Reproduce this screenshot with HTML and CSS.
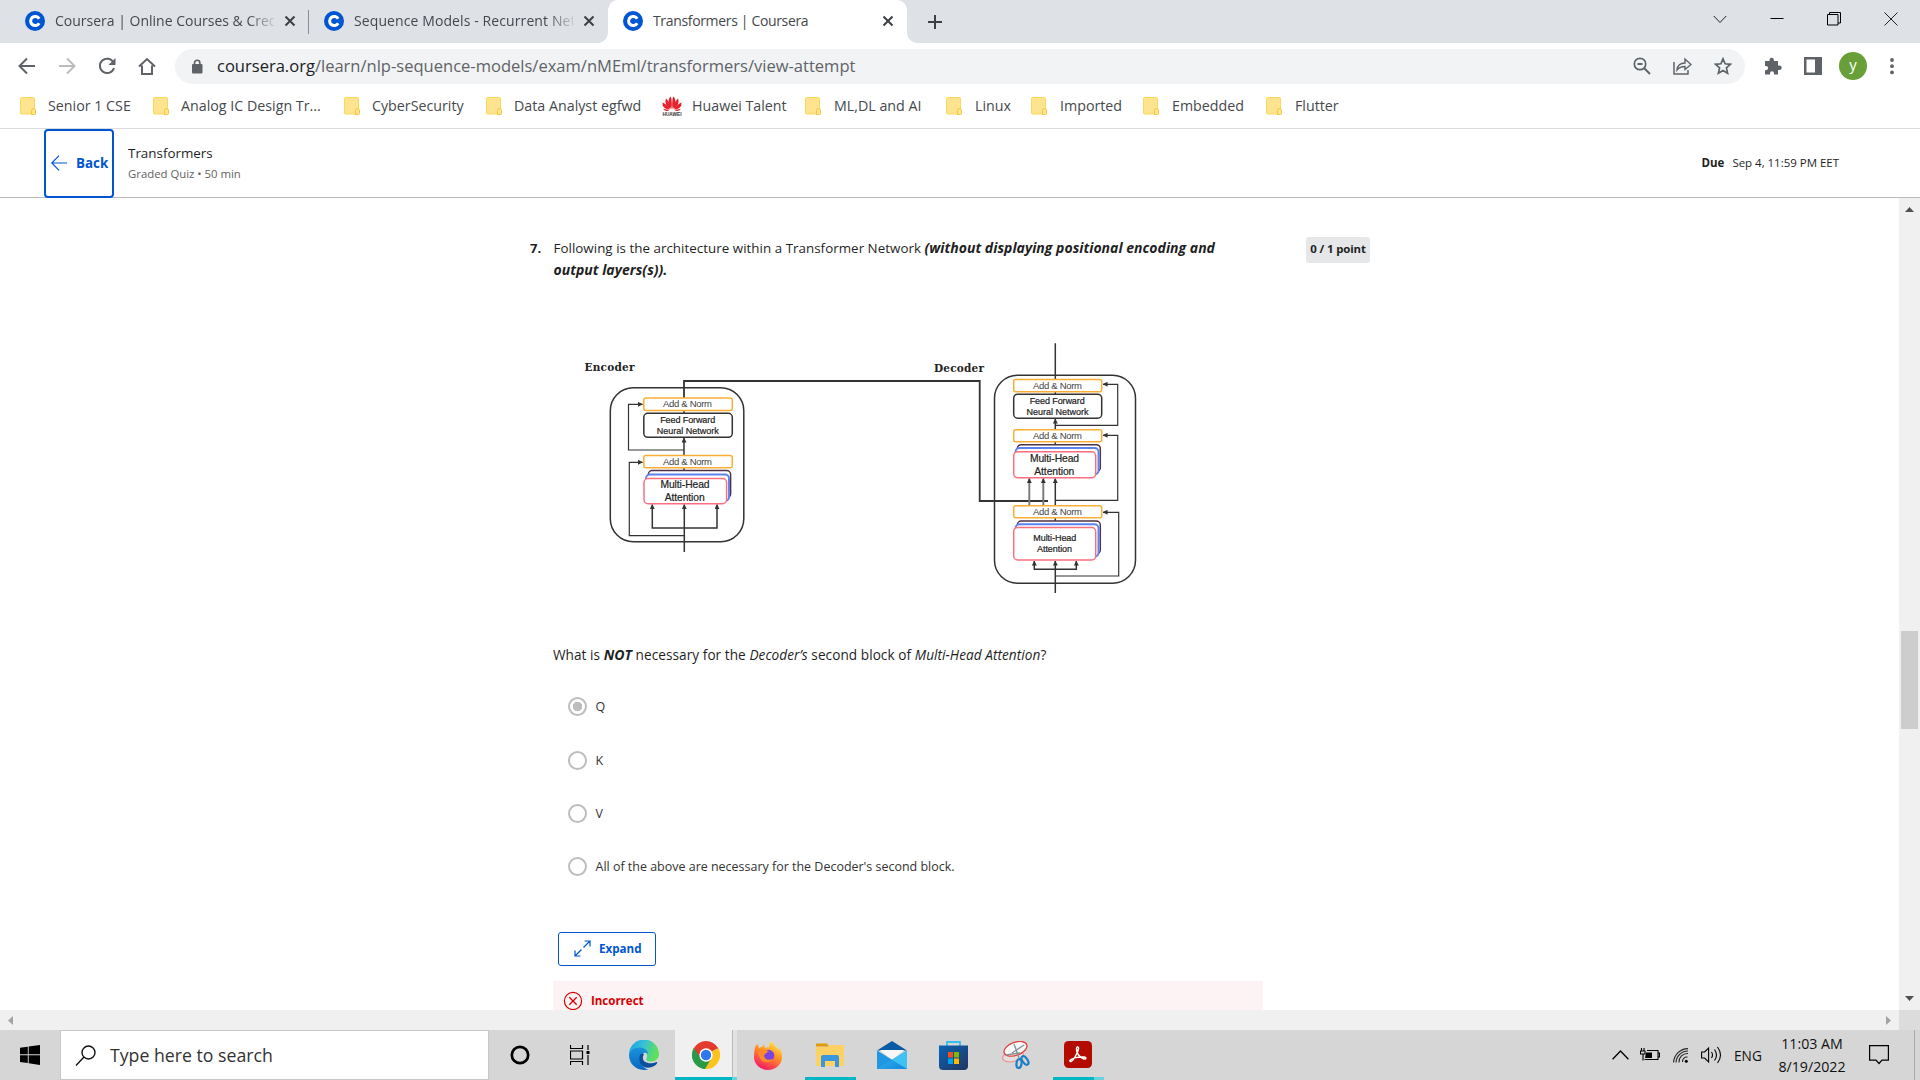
FILE: index.html
```html
<!DOCTYPE html>
<html lang="en">
<head>
<meta charset="utf-8">
<title>Transformers | Coursera</title>
<link rel="stylesheet" href="styles.css">
</head>
<body>
<svg class="defs" width="0" height="0">
  <defs>
    <symbol id="cour" viewBox="0 0 20 20"><circle cx="10" cy="10" r="10" fill="#0056d2"/><path d="M14.2 12.3A4.6 4.6 0 1 1 14.2 7.7" fill="none" stroke="#fff" stroke-width="3"/></symbol>
    <symbol id="x" viewBox="0 0 12 12"><path d="M1.5 1.5l9 9M10.500 1.500l-9 9" stroke="#3c4043" stroke-width="2"/></symbol>
    <symbol id="folder" viewBox="0 0 16 18"><path d="M1.500.5h12q1 0 1 1v15.500h-13q-1 0-1-1V1.500q0-1 1-1z" fill="#ffe48f" stroke="#fbd75b"/><path d="M11.500 17.500v-4l1-1.800h2l1 1.300v3.500q0 1-1 1z" fill="#ffe48f" stroke="#f3c63d"/></symbol>
    <marker id="arr" viewBox="0 0 6 6" refX="5.500" refY="3" markerWidth="5" markerHeight="5" markerUnits="userSpaceOnUse" orient="auto"><path d="M0 0L6 3L0 6z" fill="#333"/></marker>
    <linearGradient id="edgeA" x1="0" y1="0" x2="1" y2=".3"><stop offset="0" stop-color="#1b9de2"/><stop offset=".5" stop-color="#35c1d8"/><stop offset="1" stop-color="#5fe05a"/></linearGradient>
    <linearGradient id="edgeB" x1="0" y1="0" x2="0" y2="1"><stop offset="0" stop-color="#1a93dc"/><stop offset="1" stop-color="#0967c0"/></linearGradient>
    <linearGradient id="fox" x1=".8" y1="0" x2=".3" y2="1"><stop offset="0" stop-color="#fff14a"/><stop offset=".45" stop-color="#ff9022"/><stop offset="1" stop-color="#f5156c"/></linearGradient>
    <linearGradient id="mailg" x1="0" y1="0" x2="1" y2="1"><stop offset="0" stop-color="#35c0f2"/><stop offset="1" stop-color="#1583dc"/></linearGradient>
    <linearGradient id="storeg" x1="0" y1="0" x2="1" y2="1"><stop offset="0" stop-color="#0a63b5"/><stop offset="1" stop-color="#22355f"/></linearGradient>
  </defs>
</svg>

<div class="screen">
  <div class="tabs">
    <div class="tab first"><svg class="fav"><use href="#cour"/></svg><span class="tt fade snug">Coursera | Online Courses &amp; Cred</span><svg class="tx"><use href="#x"/></svg></div>
    <div class="tab"><svg class="fav"><use href="#cour"/></svg><span class="tt fade">Sequence Models - Recurrent Net</span><svg class="tx"><use href="#x"/></svg></div>
    <div class="tab active"><svg class="fav"><use href="#cour"/></svg><span class="tt tight">Transformers | Coursera</span><svg class="tx"><use href="#x"/></svg></div>
    <svg class="plus" viewBox="0 0 16 16"><path d="M8 1v14M1 8h14" stroke="#3c4043" stroke-width="2"/></svg>
    <div class="win">
      <svg viewBox="0 0 14 14"><path d="M.8 4l6.200 6.500L13.200 4" fill="none" stroke="#222"/></svg>
      <svg viewBox="0 0 14 14"><path d="M.5 6.500h13" stroke="#000"/></svg>
      <svg viewBox="0 0 14 14"><path d="M.5 2.500h10.500v10.500H.5zM2.500 2.500V.5h11v10.500H11" fill="none" stroke="#000"/></svg>
      <svg viewBox="0 0 14 14"><path d="M.5.5l13 13M13.500.5l-13 13" stroke="#222"/></svg>
    </div>
  </div>

  <div class="toolbar">
    <div class="nav">
      <svg viewBox="0 0 18 18"><path d="M17 9H2M9 1.500L1.500 9 9 16.500" fill="none" stroke="#5f6368" stroke-width="2"/></svg>
      <svg viewBox="0 0 18 18"><path d="M1 9h15M9 1.500L16.500 9 9 16.500" fill="none" stroke="#babcbe" stroke-width="2"/></svg>
      <svg viewBox="0 0 18 18"><path d="M15.500 5.500A7.200 7.200 0 1 0 16 11" fill="none" stroke="#5f6368" stroke-width="2"/><path d="M17.500 1v7h-7z" fill="#5f6368"/></svg>
      <svg viewBox="0 0 18 18"><path d="M1 9.500L9 2l8 7.500M4 8.500V17h10V8.500" fill="none" stroke="#5f6368" stroke-width="2"/></svg>
    </div>
    <div class="omni">
      <svg class="lock" viewBox="0 0 12 15"><rect x="1" y="5" width="10.500" height="9.500" rx="1" fill="#5f6368"/><path d="M3.500 6V4a2.700 2.700 0 0 1 5.400 0v2" fill="none" stroke="#5f6368" stroke-width="1.600"/></svg>
      <span class="url"><b>coursera.org</b>/learn/nlp-sequence-models/exam/nMEml/transformers/view-attempt</span>
      <svg class="oi" viewBox="0 0 18 18"><circle cx="7" cy="7" r="5.700" fill="none" stroke="#5f6368" stroke-width="1.700"/><path d="M4.500 7h5M11 11l6 6" stroke="#5f6368" stroke-width="1.900"/></svg>
      <svg class="oi share" viewBox="0 0 19 18"><path d="M1 5v12h14v-4" fill="none" stroke="#5f6368" stroke-width="1.500"/><path d="M4 13c.5-5 3-7 8-7V2l6 5.500-6 5V9.500c-4 0-6 1-8 3.500z" fill="none" stroke="#5f6368" stroke-width="1.400"/></svg>
      <svg class="oi" viewBox="0 0 18 18"><path d="M9 1.800l2.100 5 5.400.5-4.100 3.600 1.200 5.300L9 13.400l-4.600 2.800 1.200-5.300L1.500 7.300l5.400-.5z" fill="none" stroke="#5f6368" stroke-width="1.700"/></svg>
    </div>
    <div class="ext">
      <svg viewBox="0 0 18 18"><path d="M1 4h4.500V3a2.200 2.200 0 0 1 4.400 0v1H14v4.500h1.500a2.200 2.200 0 0 1 0 4.400H14V17.500h-4v-1.300a2 2 0 0 0-4 0v1.300H1v-4.300h1a2 2 0 0 0 0-4.200H1z" fill="#5f6368"/></svg>
      <svg viewBox="0 0 18 18"><path d="M0 0h18v18H0zM2.500 2.500v13h8.500v-13z" fill="#5f6368" fill-rule="evenodd"/></svg>
      <span class="avatar">y</span>
      <svg viewBox="0 0 18 18"><circle cx="9" cy="3" r="1.900" fill="#5f6368"/><circle cx="9" cy="9.200" r="1.900" fill="#5f6368"/><circle cx="9" cy="15.400" r="1.900" fill="#5f6368"/></svg>
    </div>
  </div>

  <div class="marks">
    <span class="mk"><svg><use href="#folder"/></svg>Senior 1 CSE</span>
    <span class="mk"><svg><use href="#folder"/></svg>Analog IC Design Tr...</span>
    <span class="mk"><svg><use href="#folder"/></svg>CyberSecurity</span>
    <span class="mk"><svg><use href="#folder"/></svg>Data Analyst egfwd</span>
    <span class="mk"><svg class="hw" viewBox="0 0 20 20"><g fill="#e5222b"><path d="M9.500 13C5.500 8 6 2 8.800 0.500 10 4 10 9 9.500 13zM10.500 13C14.500 8 14 2 11.200 0.500 10 4 10 9 10.500 13z"/><path d="M8.500 13.300C4 10.500 2.500 6 4 2.500 7 5 8.500 9 8.500 13.300zM11.500 13.300C16 10.500 17.500 6 16 2.500 13 5 11.500 9 11.500 13.300z"/><path d="M7.500 13.600C3 13.400 0 10.500.5 6.500 4 8 6.500 10.500 7.500 13.600zM12.500 13.600C17 13.400 20 10.500 19.500 6.500 16 8 13.500 10.500 12.500 13.600z"/><path d="M7.500 14.300C5 15.700 2.500 15 1.200 12.800zM12.500 14.300c2.500 1.400 5 .7 6.300-1.500z"/></g><text x="0.500" y="19.600" font-size="4.800" font-weight="700" textLength="19" lengthAdjust="spacingAndGlyphs" fill="#333">HUAWEI</text></svg>Huawei Talent</span>
    <span class="mk"><svg><use href="#folder"/></svg>ML,DL and AI</span>
    <span class="mk"><svg><use href="#folder"/></svg>Linux</span>
    <span class="mk"><svg><use href="#folder"/></svg>Imported</span>
    <span class="mk"><svg><use href="#folder"/></svg>Embedded</span>
    <span class="mk"><svg><use href="#folder"/></svg>Flutter</span>
  </div>

  <header class="head">
    <div class="back"><svg viewBox="0 0 16 16"><path d="M16 8H1M8 .7L.8 8 8 15.300" fill="none" stroke="#0056d2" stroke-width="1.200"/></svg>Back</div>
    <div class="ttl"><div class="t1">Transformers</div><div class="t2">Graded Quiz • 50 min</div></div>
    <div class="due"><b>Due</b><span>Sep 4, 11:59 PM EET</span></div>
  </header>

  <div class="view">
    <main class="content">
      <div class="qrow">
        <div class="num">7.</div>
        <div class="qt">Following is the architecture within a Transformer Network <b class="bi">(without displaying positional encoding and output layers(s)).</b></div>
        <div class="pts">0 / 1 point</div>
      </div>

      <svg class="dia" viewBox="553 330 597 280" width="597" height="280">
        <g fill="none" stroke="#333" stroke-width="1.500">
          <rect x="610.300" y="387.700" width="133.500" height="154" rx="23"/>
          <rect x="994.500" y="375.300" width="141" height="208" rx="23"/>
          <path d="M684 398V381H979.700V501H1048" stroke-width="1.800"/>
          <path d="M684 455.300V438" marker-end="url(#arr)"/>
          <path d="M684 450H628.500V404.300H642.500" stroke-width="1.200" marker-end="url(#arr)"/>
          <path d="M684 414v-4M684 471v-4"/>
          <path d="M684.300 552V504.500" marker-end="url(#arr)"/>
          <path d="M684 528H652.300V504.500" marker-end="url(#arr)"/>
          <path d="M684 528H717V504.500" marker-end="url(#arr)"/>
          <path d="M684 535.700H629.300V462.300H642.500" stroke-width="1.200" marker-end="url(#arr)"/>
          <path d="M1055.300 343.300V379M1055.300 391v4M1055.300 441v4M1055.300 517v4"/>
          <path d="M1055.300 430V419" marker-end="url(#arr)"/>
          <path d="M1055.300 425.400H1117.700V384.300H1103" stroke-width="1.200" marker-end="url(#arr)"/>
          <path d="M1055.300 506V478.500" marker-end="url(#arr)"/>
          <path d="M1055.300 500.300H1117.700V435.300H1103" stroke-width="1.200" marker-end="url(#arr)"/>
          <path d="M1029.300 505V478.500" stroke-width="1.900" stroke="#777" marker-end="url(#arr)"/>
          <path d="M1043.300 505V478.500" stroke-width="1.900" stroke="#777" marker-end="url(#arr)"/>
          <path d="M1055.300 593V561" marker-end="url(#arr)"/>
          <path d="M1055.300 569.300H1034.300V561" marker-end="url(#arr)"/>
          <path d="M1055.300 569.300H1076.300V561" marker-end="url(#arr)"/>
          <path d="M1055.300 576H1118.700V512.300H1103" stroke-width="1.200" marker-end="url(#arr)"/>
        </g>
        <g fill="#fff" stroke-width="1.500">
          <g stroke="#fbae35"><rect x="643.800" y="398" width="88.500" height="12.500" rx="2"/><rect x="643.800" y="455.500" width="88.500" height="12.300" rx="2"/><rect x="1013.700" y="379.500" width="88" height="12.200" rx="2"/><rect x="1013.700" y="429.700" width="88" height="12" rx="2"/><rect x="1013.700" y="505.800" width="88" height="12" rx="2"/></g>
          <g stroke="#333"><rect x="643.800" y="413.300" width="88.500" height="24" rx="4"/><rect x="1013.700" y="394.200" width="88" height="24" rx="4"/></g>
          <g stroke="#4f3145"><rect x="648.300" y="470.500" width="82.300" height="27.500" rx="4"/><rect x="1017.300" y="444.700" width="83" height="27" rx="4"/><rect x="1017.300" y="521" width="83" height="33" rx="4"/></g>
          <g stroke="#5b82ee" stroke-width="1.900"><rect x="646" y="474.500" width="83" height="26.500" rx="4"/><rect x="1015.500" y="448" width="83" height="26.500" rx="4"/><rect x="1015.500" y="524.200" width="83" height="32.500" rx="4"/></g>
          <g stroke="#fb6f80"><rect x="644" y="478.500" width="82.600" height="25.200" rx="4"/><rect x="1013.700" y="451.800" width="82" height="26" rx="4"/><rect x="1013.700" y="527.500" width="82" height="32.500" rx="4"/></g>
        </g>
        <g class="an"><text x="663" y="407.200" textLength="49">Add &amp; Norm</text><text x="663" y="465" textLength="49">Add &amp; Norm</text><text x="1033" y="389" textLength="49">Add &amp; Norm</text><text x="1033" y="439.300" textLength="49">Add &amp; Norm</text><text x="1033" y="515.300" textLength="49">Add &amp; Norm</text></g>
        <g class="bl"><text x="660.200" y="423.200" textLength="55">Feed Forward</text><text x="656.700" y="433.800" textLength="62">Neural Network</text><text x="1029.700" y="404.200" textLength="55">Feed Forward</text><text x="1026.500" y="414.800" textLength="62">Neural Network</text><text x="1033.300" y="541.300" textLength="43">Multi-Head</text><text x="1037" y="552.300" textLength="35">Attention</text></g>
        <g class="bl big"><text x="660.500" y="488.300" textLength="49">Multi-Head</text><text x="664.700" y="500.500" textLength="40">Attention</text><text x="1030" y="462.300" textLength="49">Multi-Head</text><text x="1034.300" y="474.500" textLength="40">Attention</text></g>
        <g class="cap"><text x="584.500" y="371" textLength="50">Encoder</text><text x="934" y="372.300" textLength="50">Decoder</text></g>
      </svg>

      <div class="ask">What is <b class="bi">NOT</b> necessary for the <i>Decoder’s</i> second block of <i>Multi-Head Attention</i>?</div>

      <div class="opts">
        <div class="opt"><span class="rad on"></span>Q</div>
        <div class="opt"><span class="rad"></span>K</div>
        <div class="opt"><span class="rad"></span>V</div>
        <div class="opt"><span class="rad"></span>All of the above are necessary for the Decoder's second block.</div>
      </div>

      <div class="expand"><svg viewBox="0 0 17 17"><path d="M10.500 1H16v5.500M16 1L9.500 7.500M1 10.500V16h5.500M1 16l6.500-6.500" fill="none" stroke="#0056d2" stroke-width="1.200"/></svg>Expand</div>
      <div class="wrong"><svg viewBox="0 0 20 20"><circle cx="10" cy="10" r="8.600" fill="none" stroke="#d30001" stroke-width="1.200"/><path d="M6.300 6.300l7.400 7.400M13.700 6.300l-7.400 7.400" stroke="#d30001" stroke-width="1.300"/></svg>Incorrect</div>
    </main>
    <div class="vbar">
      <svg viewBox="0 0 9 5"><path d="M0 5L4.500 0 9 5z" fill="#505050"/></svg>
      <div class="thumb"></div>
      <svg viewBox="0 0 9 5"><path d="M0 0L4.500 5 9 0z" fill="#505050"/></svg>
    </div>
  </div>
  <div class="hbar">
    <svg viewBox="0 0 5 9"><path d="M5 0L0 4.500 5 9z" fill="#a3a3a3"/></svg>
    <svg viewBox="0 0 5 9"><path d="M0 0L5 4.500 0 9z" fill="#a3a3a3"/></svg>
    <div class="corner"></div>
  </div>

  <div class="task">
    <div class="start"><svg width="20" height="20" viewBox="0 0 20 20"><path d="M0 2.800L7.800 1.700V9.300H0zM8.700 1.500L20 0v9.300H8.700zM0 10.300h7.800v7.800L0 17zM8.700 10.300H20V20L8.700 18.300z"/></svg></div>
    <div class="search"><svg width="21" height="21" viewBox="0 0 21 21"><circle cx="13.500" cy="7.500" r="6.500" fill="none" stroke="#111" stroke-width="1.400"/><path d="M9 12L1 20.500" stroke="#111" stroke-width="1.400"/></svg>Type here to search</div>
    <div class="cell"><svg width="20" height="20" viewBox="0 0 20 20"><circle cx="10" cy="10" r="8.200" fill="none" stroke="#000" stroke-width="2.700"/></svg></div>
    <div class="cell tv"><svg width="20" height="20" viewBox="0 0 20 20"><path d="M.5 0v3.500h12V0M.5 20v-3.500h12V20M.5 6h12v8H.5zM18 0v5M18 10v10" fill="none" stroke="#000" stroke-width="1.200"/><path d="M16.500 6h3v3h-3z"/></svg></div>
    <div class="cell"><svg width="30" height="30" viewBox="0 0 30 30"><path d="M0 15A15 15 0 0 1 30 14c0 5-4 7.500-8 7.500-4 0-5.500-1.500-4.500-3 2-4-1-8-6-8.500C6 9.500 1 12 0 15z" fill="url(#edgeA)"/><path d="M0 15c1-5 6-8 11-7.500 5 .5 8 3.500 8 6.500-3-3-8 0-7.500 6 .4 4 3 8.500 8 9.500C9 32 0 25 0 15z" fill="url(#edgeB)"/><path d="M11 15c-3 8 4 17 15 10.500 1.500-1 2.800-3 2-3.500-.8-.4-2 1-5.500 1.200C15 23.500 12 19 15 14c-2-.5-3.500 0-4 1z" fill="#0c4f9c"/></svg></div>
    <div class="cell cur"><svg width="28" height="28" viewBox="0 0 28 28"><path d="M14 14L1.900 7A14 14 0 0 1 26.100 7z" fill="#e33b2e"/><path d="M14 14V28A14 14 0 0 1 1.900 7z" fill="#2a9a48"/><path d="M14 14l12.100-7A14 14 0 0 1 13 28z" fill="#fcc31e"/><path d="M14 7.500h12.400A14 14 0 0 0 26.100 7L1.900 7l6.500 10.200z" fill="#e33b2e"/><path d="M8.400 17.200L1.900 7A14 14 0 0 0 13 28l6.500-11z" fill="#2a9a48"/><circle cx="14" cy="14" r="6.700" fill="#fff"/><circle cx="14" cy="14" r="5.200" fill="#3079ea"/></svg></div>
    <div class="cell"><svg width="28" height="29" viewBox="0 0 28 29"><path d="M1.500 5l2-2 1.500 4c1-.6 2-1 3-1l2-3 1 4c2-1 3-1 4-.5C14.500 4 16 1.500 18 0c1 4 5 5.500 6.500 9 1-.5 0-3 0-3 3 3 3.500 7 3.500 10a14 13 0 0 1-28 0C0 12 .5 8 1.500 5z" fill="url(#fox)"/><circle cx="14.500" cy="14.500" r="5.800" fill="#7b45dd"/><path d="M4 12c4-3 9-4 11-1-3 0-3 2-5 3 0 4 4 6 9 4-3 5-12 4-13-1z" fill="#ff8b2b"/></svg></div>
    <div class="cell run"><svg width="28" height="26" viewBox="0 0 28 26"><path d="M0 1.500h11l2 3H0z" fill="#df9a05"/><path d="M0 5h12l2-2h14v21H0z" fill="#fed164"/><path d="M5 25V15q0-2 2-2h14q2 0 2 2v10h-4v-6H9v6z" fill="#3a97dd"/></svg></div>
    <div class="cell"><svg width="30" height="28" viewBox="0 0 30 28"><path d="M0 9.500L15 0l15 9.500z" fill="#0a5aa5"/><path d="M3 9h24l-12 10z" fill="#f7f7f7"/><path d="M0 9.500L30 28H0z" fill="#2197e4"/><path d="M30 9.500V28L0 28z" fill="url(#mailg)"/><path d="M15 18.700L30 28V9.500z" fill="#3cc3f3"/></svg></div>
    <div class="cell store"><svg width="29" height="29" viewBox="0 0 29 29"><path d="M8 5V1h13v4" fill="none" stroke="#35bdf0" stroke-width="1.800"/><path d="M0 4.500h29V25q0 4-4 4H4q-4 0-4-4z" fill="url(#storeg)"/><path d="M9 11h5v5.500H9z" fill="#f25022"/><path d="M15 11h5v5.500h-5z" fill="#7fba00"/><path d="M9 17.500h5V23H9z" fill="#00a4ef"/><path d="M15 17.500h5V23h-5z" fill="#ffb900"/></svg></div>
    <div class="cell"><svg width="28" height="28" viewBox="0 0 28 28"><ellipse cx="11" cy="15" rx="10.500" ry="5.500" fill="#e6dede" stroke="#e88" transform="rotate(-14 11 15)"/><ellipse cx="13.500" cy="7.800" rx="12" ry="6.500" fill="#fafafa" stroke="#e34040" stroke-width="1.300" transform="rotate(-20 13.500 7.800)"/><path d="M12 3l5 14M4 14l14-2M22 4L10 12" stroke="#8a9299" stroke-width="1.400"/><g fill="none" stroke="#1d7fc4" stroke-width="2.200"><ellipse cx="17" cy="22.500" rx="2.500" ry="4.500" transform="rotate(8 17 22.500)"/><ellipse cx="23" cy="19.500" rx="2.500" ry="4.800" transform="rotate(-35 23 19.500)"/></g></svg></div>
    <div class="cell acr"><svg width="28" height="27" viewBox="0 0 28 27"><rect width="28" height="27" rx="4.500" fill="#b30b00"/><path d="M6 19.500c1.500-2.500 9-4 14-3.500 3 .5 2 2.500 0 2-4-1-8-6-7.500-10.500.4-2.500 2.500-2 2 .5C13.500 12 9 20.500 7 20.500c-1 0-1.300-.5-1-1z" fill="none" stroke="#fff" stroke-width="1.500"/></svg></div>
    <div class="tray">
      <svg width="17" height="10" viewBox="0 0 17 10"><path d="M.6 9.200L8.500 1l7.900 8.200" fill="none" stroke="#000" stroke-width="1.300"/></svg>
      <svg class="bat" width="20" height="14" viewBox="0 0 20 14"><path d="M7 2.500h11v9H4.500M18.500 5h1v4h-1M1.500 0v3M4 0v3M.5 3h4.500v3H.5zM3 6v6.500" fill="none" stroke="#000" stroke-width="1.100"/><path d="M6 4.500h6v5.500H5z"/></svg>
      <svg class="wifi" width="16" height="15" viewBox="0 0 16 15"><circle cx="13.300" cy="13.300" r="1.500"/><path d="M9.500 14a4.500 4.500 0 0 1 5-5M6 14.500A8.500 8.500 0 0 1 15 5.500M3 14.500A12 12 0 0 1 15 3M.6 14.500A14.500 14.500 0 0 1 15 .6" fill="none" stroke="#222" stroke-width="1.100"/></svg>
      <svg class="vol" width="21" height="18" viewBox="0 0 21 18"><path d="M.6 6h3l4-4v14l-4-4h-3zM10.500 6q2 3 0 6M13.500 3.500q4 5.500 0 11M16.500 1q6 8 0 16" fill="none" stroke="#000" stroke-width="1.100"/></svg>
      <span class="eng">ENG</span>
      <div class="clock"><div>11:03 AM</div><div>8/19/2022</div></div>
      <svg class="note" width="20" height="20" viewBox="0 0 20 20"><path d="M.6.600h18.800v14.500H13L10 18.500 7 15.100H.6z" fill="none" stroke="#000" stroke-width="1.200"/></svg>
      <i class="peek"></i>
    </div>
  </div>
</div>
</body>
</html>
```
FILE: styles.css
```css
*{box-sizing:border-box}
body{margin:0;font-family:"Open Sans","Noto Sans",sans-serif;background:#fff;color:#1f1f1f}
svg{display:block;flex:none}
.defs{position:absolute}
.screen{width:1920px;height:1080px;display:flex;flex-direction:column;overflow:hidden}

.tabs{height:43px;background:#dee1e6;display:flex;align-items:center;padding-left:10px;flex:none}
.tab{width:299px;height:43px;display:flex;align-items:center;padding:0 13px 2px 15px}
.tab.first{background:linear-gradient(#8a8d91,#8a8d91) right 0 top 10px/1px 24px no-repeat}
.tab.active{background:#fff;border-radius:10px 10px 0 0;position:relative}
.tab.active:before,.tab.active:after{content:"";position:absolute;bottom:0;width:10px;height:10px}
.tab.active:before{left:-10px;background:radial-gradient(circle at 0 0,transparent 9.5px,#fff 10px)}
.tab.active:after{right:-10px;background:radial-gradient(circle at 100% 0,transparent 9.5px,#fff 10px)}
.fav{width:20px;height:20px}
.tt{margin-left:10px;width:219px;font-size:14px;letter-spacing:.1px;color:#45494d;white-space:nowrap;overflow:hidden;flex:none}
.fade{-webkit-mask-image:linear-gradient(90deg,#000 88%,transparent 102%);mask-image:linear-gradient(90deg,#000 88%,transparent 102%)}
.snug{letter-spacing:0}
.tight{letter-spacing:-.34px}
.tx{width:12px;height:12px;margin-left:10px}
.plus{width:16px;height:16px;margin-left:20px}
.win{margin-left:auto;display:flex;gap:43px;padding:0 22px 6px 0}
.win svg{width:14px;height:14px}

.toolbar{height:47px;display:flex;align-items:center;flex:none;padding-bottom:1px}
.nav{width:175px;display:flex;gap:22px;padding:0 0 0 18px}
.nav svg{width:18px;height:18px}
.omni{width:1570px;height:35px;border-radius:18px;background:#f1f3f4;display:flex;align-items:center;padding:0 13px 0 16px}
.lock{width:12px;height:15px}
.url{flex:1;margin-left:14px;font-size:16.55px;line-height:24px;padding-bottom:1px;color:#5f6368;white-space:nowrap}
.url b{font-weight:400;color:#202124}
.oi{width:18px;height:18px;margin-left:22px}
.share{width:19px}
.ext{display:flex;align-items:center;gap:22px;padding:0 0 1px 19px}
.ext svg{width:18px;height:18px}
.ext svg:last-child{margin-left:-6px}
.avatar{width:28px;height:28px;border-radius:50%;background:#689f38;color:#fff;font-size:15px;line-height:25px;text-align:center;margin-left:-5px}

.marks{height:39px;flex:none;border-bottom:1px solid #dadce0;display:grid;grid-template-columns:133px 191px 142px 176px 143px 141px 85px 112px 123px 90px;padding:0 0 7px 20px;align-items:center;font-size:14.250px;color:#45494d}
.mk{display:flex;align-items:center;white-space:nowrap}
.mk svg{width:16px;height:18px;margin-right:12px}
.mk:nth-child(n+6) svg{margin-right:13px}
.mk .hw{width:20px;height:20px;margin:0 10px 0 0;font-family:"Liberation Sans",sans-serif}

.head{height:69px;flex:none;border-bottom:1px solid #bbb;display:flex;align-items:center;padding:0 81px 0 44px}
.back{width:70px;height:69px;border:2px solid #0056d2;border-radius:4px;color:#0056d2;font-weight:700;font-size:13.400px;display:flex;align-items:center;gap:9px;padding-left:5px}
.back svg{width:16px;height:16px}
.ttl{margin-left:14px;white-space:nowrap}
.t1{font-size:13.400px;line-height:21px}
.t2{font-size:11.350px;line-height:20px;color:#636363}
.due{margin-left:auto;display:flex;gap:8px;font-size:11.500px;letter-spacing:-.02px;padding-bottom:2px}
.due b{font-size:11.500px}

.view{height:812px;flex:none;display:flex;overflow:hidden}
.content{flex:1;padding:39px 0 0 529px;height:812px;overflow:hidden}
.qrow{display:flex;align-items:flex-start;height:93px;font-size:13.370px;line-height:22px}
.num{width:24.500px;padding-left:1px;font-weight:700;font-size:13px}
.qt{width:690px;white-space:normal;padding-right:10px;letter-spacing:.03px}
.bi{font-style:italic;font-weight:700;font-size:14px;letter-spacing:.02px}
.pts{margin-left:62.500px;width:64px;height:26px;background:#e5e7e8;border-radius:3px;font-size:11.400px;font-weight:700;text-align:center;line-height:24px;letter-spacing:-.1px}
.dia{margin-left:24px}
.an,.bl{font-family:"Liberation Sans",sans-serif;font-size:9.500px;fill:#444}
.bl{font-size:9px;fill:#222;stroke:#222;stroke-width:.2px}
.big{font-size:10.300px}
.cap{font-family:"DejaVu Serif","Liberation Serif",serif;font-weight:700;font-size:10.500px;fill:#222}
.ask{margin:34px 0 0 24px;font-size:13.600px;line-height:22px;letter-spacing:.060px;white-space:nowrap}
.opts{margin:14px 0 0 38.500px}
.opt{height:53.400px;display:flex;align-items:center;font-size:12.470px;color:#333}
.rad{width:19px;height:19px;border:2px solid #bdbdbd;border-radius:50%;margin-right:9px;flex:none}
.rad.on{background:radial-gradient(circle,#bdbdbd 4.500px,transparent 5px)}
.expand{margin:38px 0 0 29px;width:98px;height:34px;border:1px solid #0056d2;border-radius:3px;display:flex;align-items:center;gap:8px;padding:0 0 1px 15px;color:#0056d2;font-size:11.600px;font-weight:700}
.expand svg{width:17px;height:17px}
.wrong{margin:15px 0 0 24px;width:710px;height:40px;background:#fdf3f4;display:flex;align-items:center;gap:8px;padding:0 0 0 10px;color:#d30001;font-size:11.500px;font-weight:700}
.wrong svg{width:20px;height:20px}

.vbar{width:21px;background:#f0f0f0;display:flex;flex-direction:column;align-items:center;padding:9px 0}
.vbar svg{width:9px;height:5px}
.thumb{width:17px;height:98px;background:#cdcdcd;margin:419px 0 auto}
.hbar{height:20px;flex:none;background:#f0f0f0;display:flex;align-items:center;justify-content:space-between;padding-left:8px}
.hbar svg{width:5px;height:9px}
.hbar svg:nth-child(2){margin:0 8px 0 auto}
.corner{width:21px;height:20px;background:#dcdcdc}

.task{height:50px;background:#d6d6d6;display:flex;flex:none}
.start{width:60px;display:flex;align-items:center;justify-content:center}
.search{width:429px;background:#fff;border:1px solid #c8c8c8;display:flex;align-items:center;gap:14px;padding-left:14px;font-size:17.700px;color:#333}
.cell{width:62px;height:50px;display:flex;align-items:center;justify-content:center}
.tv{padding-right:4px}
.store{padding-right:2px}
.cur{background:linear-gradient(#00b7c3,#00b7c3) 0 100%/57px 3px no-repeat,linear-gradient(#66d4db,#66d4db) 100% 100%/5px 3px no-repeat,linear-gradient(#bbb,#bbb) 57px 0/1px 47px no-repeat,linear-gradient(90deg,#f0f0f0 57px,#e2e2e2 57px)}
.run{background:linear-gradient(#00b7c3,#00b7c3) 6px 100%/51px 3px no-repeat}
.acr{background:linear-gradient(#00b7c3,#00b7c3) 6px 100%/41px 3px no-repeat,linear-gradient(#66d4db,#66d4db) 47px 100%/10px 3px no-repeat;padding-bottom:2px}
.tray{margin-left:auto;display:flex;align-items:center;color:#111}
.bat{margin-left:11px}
.wifi{margin-left:13px}
.vol{margin-left:12px}
.eng{margin-left:12px;font-size:13.700px;width:40px}
.clock{width:76px;text-align:center;font-size:14.200px;line-height:23px;padding-bottom:1px}
.note{margin-left:19px}
.peek{width:6px;height:50px;border-left:1px solid #aaa;margin-left:25px}
```
